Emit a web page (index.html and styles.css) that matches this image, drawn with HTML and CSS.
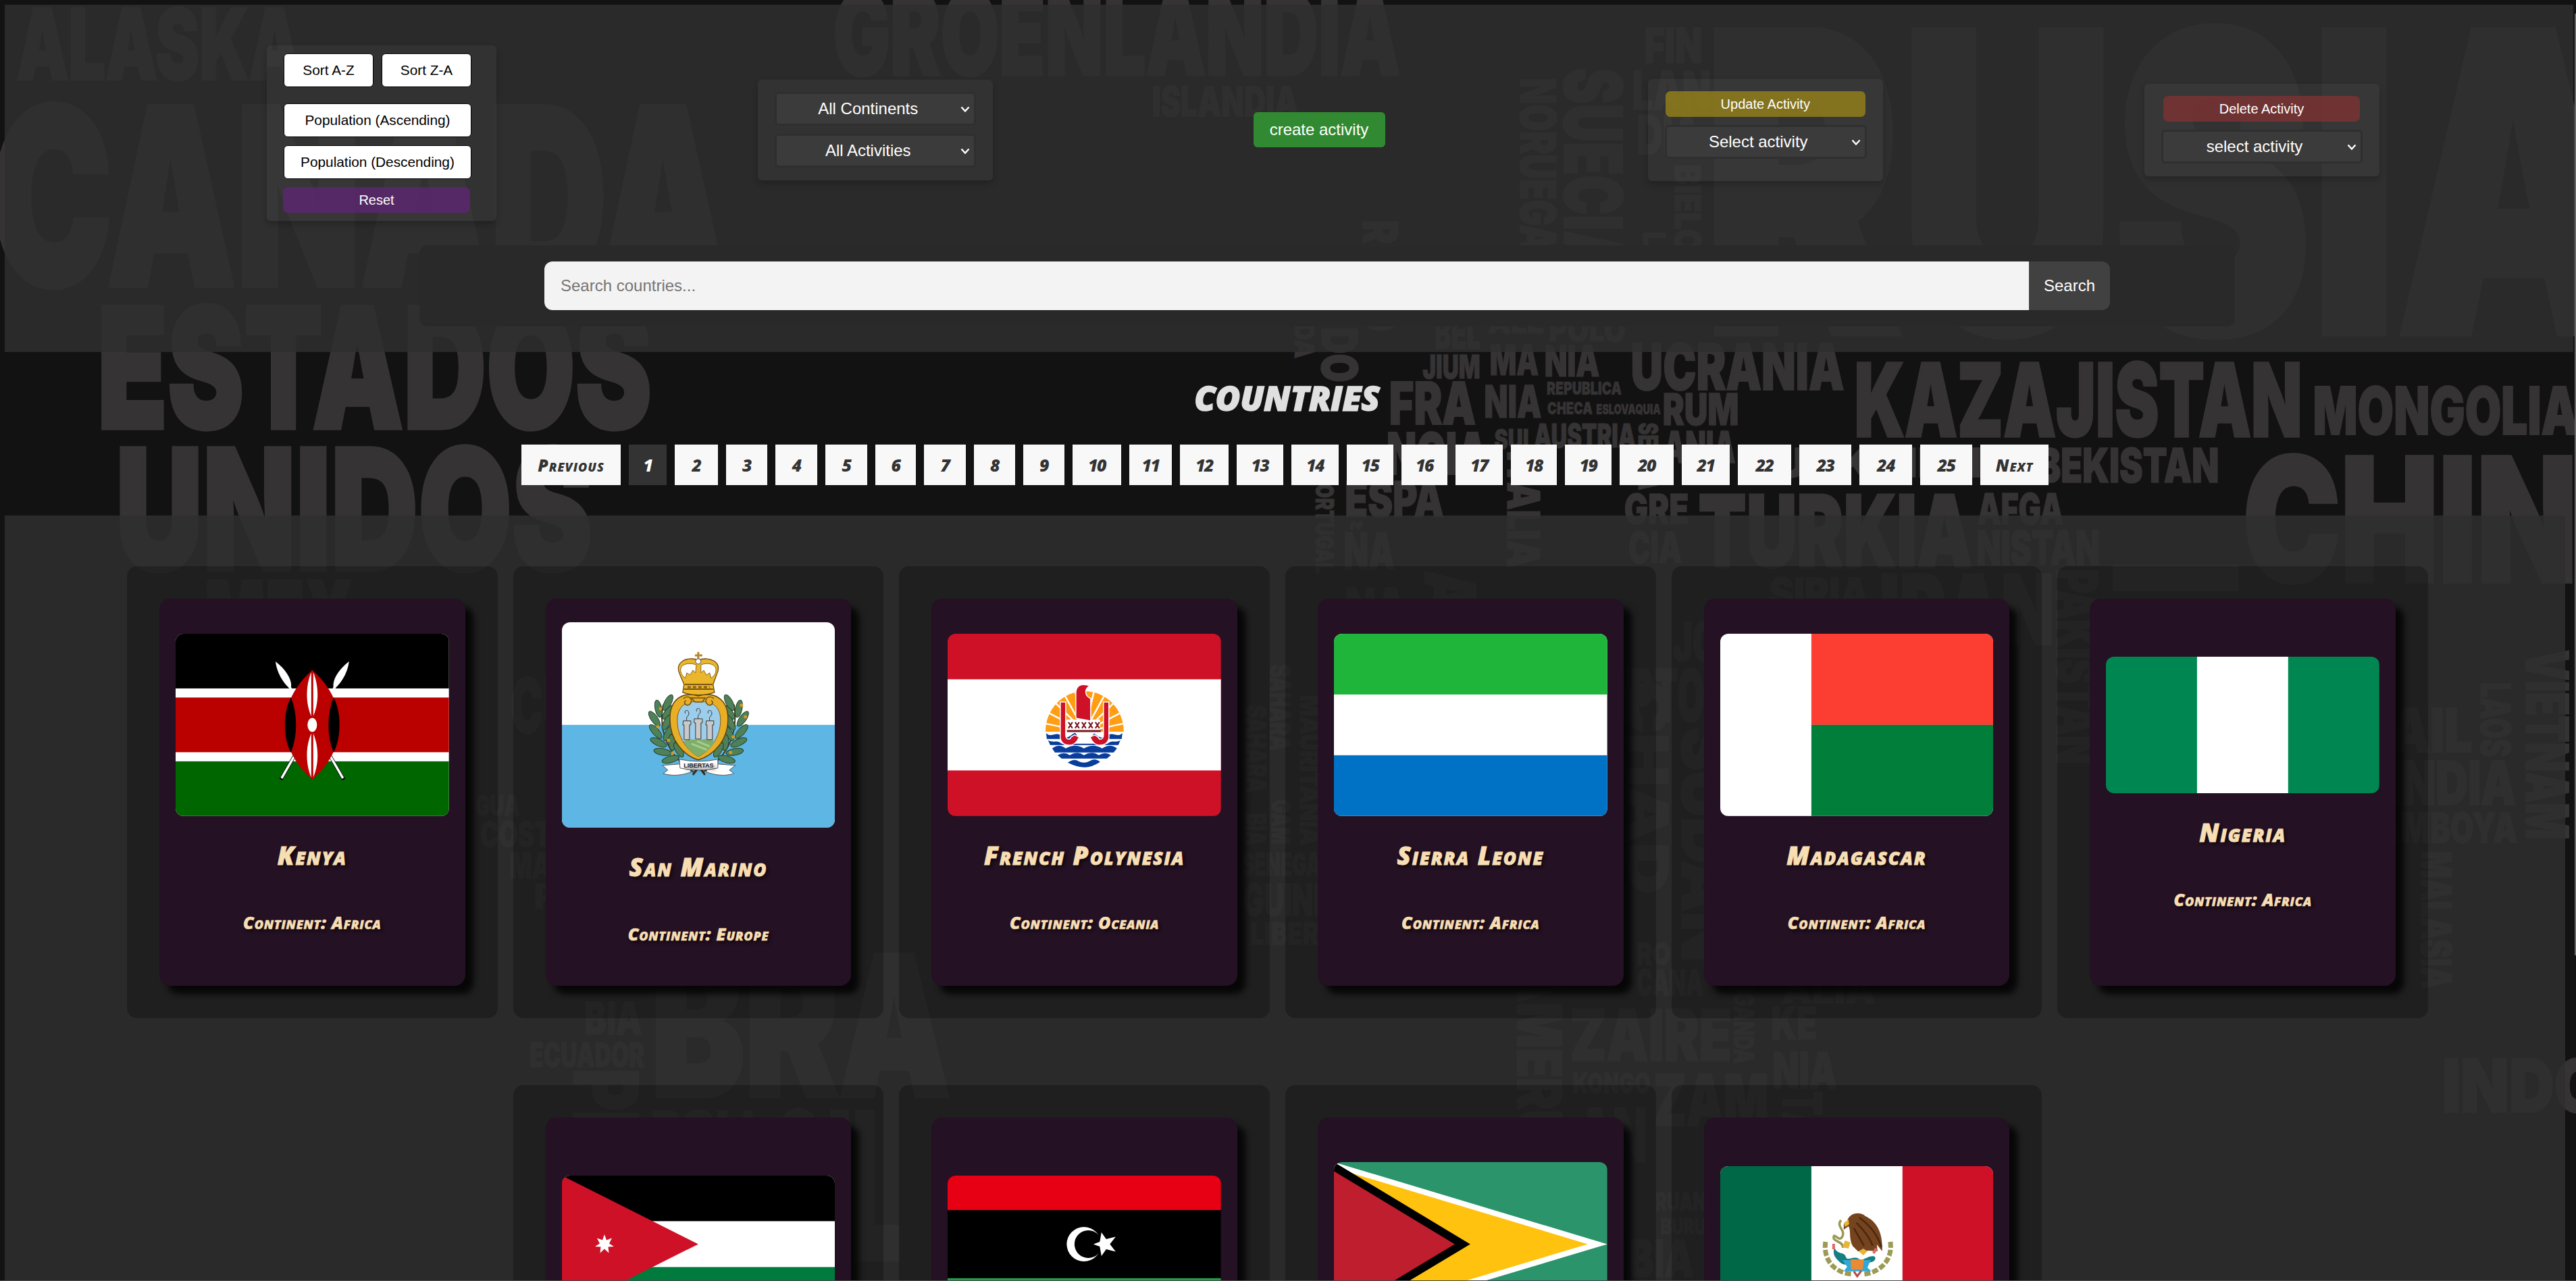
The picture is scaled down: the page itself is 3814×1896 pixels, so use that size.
FILE: index.html
```html
<!DOCTYPE html>
<html lang="en">
<head>
<meta charset="utf-8">
<title>Countries</title>
<link rel="stylesheet" href="styles.css">
</head>
<body>
<svg class="word-map" id="word-map" viewBox="0 0 3814 1896" aria-hidden="true"></svg>
<div class="page">
  <header class="panel">
    <div class="filters">
      <section class="group group-sort">
        <div class="sort-row"><button class="btn-white">Sort A-Z</button><button class="btn-white">Sort Z-A</button></div>
        <button class="btn-white">Population (Ascending)</button>
        <button class="btn-white">Population (Descending)</button>
        <button class="btn-color btn-reset">Reset</button>
      </section>
      <section class="group group-filter">
        <div class="select"><span>All Continents</span><svg class="chevron" viewBox="0 0 14 10"><path d="M1.5 1.5 7 7.5 12.5 1.5"/></svg></div>
        <div class="select"><span>All Activities</span><svg class="chevron" viewBox="0 0 14 10"><path d="M1.5 1.5 7 7.5 12.5 1.5"/></svg></div>
      </section>
      <button class="btn-create">create activity</button>
      <section class="group group-update">
        <button class="btn-color btn-update">Update Activity</button>
        <div class="select"><span>Select activity</span><svg class="chevron" viewBox="0 0 14 10"><path d="M1.5 1.5 7 7.5 12.5 1.5"/></svg></div>
      </section>
      <section class="group group-delete">
        <button class="btn-color btn-delete">Delete Activity</button>
        <div class="select"><span>select activity</span><svg class="chevron" viewBox="0 0 14 10"><path d="M1.5 1.5 7 7.5 12.5 1.5"/></svg></div>
      </section>
    </div>
    <form class="search"><input type="text" placeholder="Search countries..."><button type="button">Search</button></form>
  </header>

  <h1>COUNTRIES</h1>
  <nav class="pager">
    <a class="step">Previous</a><a class="current">1</a><a>2</a><a>3</a><a>4</a><a>5</a><a>6</a><a>7</a><a>8</a><a>9</a><a>10</a><a>11</a><a>12</a><a>13</a><a>14</a><a>15</a><a>16</a><a>17</a><a>18</a><a>19</a><a>20</a><a>21</a><a>22</a><a>23</a><a>24</a><a>25</a><a class="step">Next</a>
  </nav>

  <main class="panel cards">
    <article class="slot"><div class="card">
      <svg class="flag" viewBox="0 0 405 270">
        <rect width="405" height="270" fill="#fff"/><rect width="405" height="81" fill="#000"/><rect y="94.500" width="405" height="81" fill="#b00"/><rect y="189" width="405" height="81" fill="#060"/>
        <g><path d="M229 181 249 216" stroke="#000" stroke-width="5"/><path d="M169 78 176 96M229 181 248 214" stroke="#fff" stroke-width="3.500"/><path d="M148 41C150 58 160 74 170 82 175 72 165 54 148 41Z" fill="#fff"/></g>
        <g transform="translate(405 0) scale(-1 1)"><path d="M229 181 249 216" stroke="#000" stroke-width="5"/><path d="M169 78 176 96M229 181 248 214" stroke="#fff" stroke-width="3.500"/><path d="M148 41C150 58 160 74 170 82 175 72 165 54 148 41Z" fill="#fff"/></g>
        <path d="M202.500 54C256 100 256 170 202.500 216 149 170 149 100 202.500 54Z" fill="#b00"/>
        <path d="M171 94C159 115 159 155 171 176 181 150 181 120 171 94ZM234 94C246 115 246 155 234 176 224 150 224 120 234 94Z" fill="#000"/>
        <path d="M202.500 54C192 75 192 105 202.500 125 213 105 213 75 202.500 54ZM202.500 216C192 195 192 165 202.500 145 213 165 213 195 202.500 216Z" fill="#fff"/>
        <path d="M202.500 54V216" stroke="#b00" stroke-width="3"/><ellipse cx="202.500" cy="135" rx="7" ry="10.500" fill="#fff"/>
      </svg>
      <h2>Kenya</h2><p>Continent: Africa</p>
    </div></article>

    <article class="slot"><div class="card">
      <svg class="flag" viewBox="0 0 405 304">
        <rect width="405" height="304" fill="#fff"/><rect y="152" width="405" height="152" fill="#5eb6e4"/>
        <g fill="none" stroke="#4b3a20" stroke-width="2"><path d="M195 222C160 200 142 165 150 122M209 222C245 200 262 165 255 122"/></g>
        <g fill="#4f8158" stroke="#24402b" stroke-width="1">
          <g id="laurel">
            <ellipse cx="157" cy="119" rx="5" ry="13" transform="rotate(28 157 119)"/><ellipse cx="143" cy="128" rx="5" ry="13" transform="rotate(-12 143 128)"/><ellipse cx="158" cy="133" rx="5" ry="13" transform="rotate(40 158 133)"/><ellipse cx="137" cy="143" rx="5" ry="13" transform="rotate(-35 137 143)"/><ellipse cx="156" cy="148" rx="5" ry="13" transform="rotate(30 156 148)"/><ellipse cx="139" cy="162" rx="5" ry="13" transform="rotate(-42 139 162)"/><ellipse cx="158" cy="164" rx="5" ry="13" transform="rotate(30 158 164)"/><ellipse cx="143" cy="178" rx="5" ry="13" transform="rotate(-65 143 178)"/><ellipse cx="163" cy="178" rx="5" ry="12" transform="rotate(-5 163 178)"/><ellipse cx="149" cy="192" rx="5" ry="13" transform="rotate(-80 149 192)"/><ellipse cx="173" cy="189" rx="5" ry="12" transform="rotate(-30 173 189)"/><ellipse cx="161" cy="203" rx="5" ry="13" transform="rotate(75 161 203)"/>
          </g>
          <use href="#laurel" transform="translate(405 0) scale(-1 1)"/>
        </g>
        <g fill="#d99a1f"><circle cx="146" cy="128" r="2.500"/><circle cx="142" cy="155" r="2.500"/><circle cx="158" cy="175" r="2.500"/><circle cx="164" cy="194" r="2.500"/><circle cx="266" cy="123" r="2.500"/><circle cx="272" cy="140" r="2.500"/><circle cx="254" cy="170" r="2.500"/><circle cx="250" cy="193" r="2.500"/></g>
        <path d="M202 109C180 103 160 112 160 143 160 175 180 197 202 204 225 197 246 175 246 143 246 112 225 103 202 109Z" fill="#e8ae25" stroke="#5b4312" stroke-width="1.500"/>
        <path d="M202 118C187 116 171 122 171 145 171 170 185 190 202 199 220 190 235 170 235 145 235 122 219 116 202 118Z" fill="#9ccdea" stroke="#7b591a"/>
        <path d="M180 177C188 172 196 174 202 174 212 174 220 171 227 177 220 187 212 194 202 199 192 194 186 187 180 177Z" fill="#7fae6a"/>
        <path d="M192 180 215 189M200 176 219 184" stroke="#a5cc8c" stroke-width="3"/>
        <g fill="#c9c9c9" stroke="#333" stroke-width="1"><path d="M180 146h11v6h-2v22h-8v-22h-2zM196 143h12v6h-2v24h-8v-24h-2zM214 146h11v6h-2v22h-8v-22h-2z"/><path d="M185 146c-2-8 4-6 3-12s-8-3-5 1M202 143c-2-8 4-6 3-12s-8-3-5 1M219 146c-2-8 4-6 3-12s-8-3-5 1" fill="none"/></g>
        <path d="M180 113c9-7 16 3 9 9-6 3-10-4-5-6M225 113c-9-7-16 3-9 9 6 3 10-4 5-6M192 112h20l-4 6h-11z" fill="#e8ae25" stroke="#704f12" stroke-width="1.500"/>
        <path d="M181 92 175 78C165 58 187 50 202 56 218 50 239 58 229 78L224 92 226 104C212 109 193 109 179 104Z" fill="#eab62c" stroke="#6b4b10" stroke-width="1.300"/>
        <path d="M178 78C170 64 185 58 199 63L198 75 194 71 190 78 185 75 183 83ZM226 78C234 64 219 58 206 63L206 75 210 71 214 78 219 75 221 83Z" fill="#fff" stroke="#8d6718"/>
        <path d="M182 92h41M181 99h43" stroke="#7a5710" stroke-width="2"/><path d="M186 96h33" stroke="#8d5d16" stroke-width="3" stroke-dasharray="5 3"/>
        <path d="M202 44v11M197 49h11" stroke="#b8862a" stroke-width="3"/><circle cx="202" cy="58" r="4" fill="#fff" stroke="#555"/>
        <path d="M194 226 203 214 212 226" fill="none" stroke="#3c2c18" stroke-width="3"/>
        <path d="M174 210 149 212 157 219 150 224C165 229 180 226 191 222L190 213M231 210 257 212 248 219 255 224C240 229 226 226 214 222L216 213" fill="#fff" stroke="#555"/>
        <path d="M174 203Q203 209 231 203V216Q203 222 175 216Z" fill="#fff" stroke="#555"/>
        <text x="202.500" y="215" class="motto">LIBERTAS</text>
      </svg>
      <h2>San Marino</h2><p>Continent: Europe</p>
    </div></article>

    <article class="slot"><div class="card">
      <svg class="flag" viewBox="0 0 405 270">
        <rect width="405" height="270" fill="#ce1126"/><rect y="67.500" width="405" height="135" fill="#fff"/>
        <path d="M145 145A58 60 0 1 1 261 145Z" fill="#ff9d14"/>
        <path d="M203 145 130 130M203 145 132 108M203 145 145 88M203 145 163 72M203 145 185 68M203 145 221 68M203 145 243 72M203 145 261 88M203 145 274 108M203 145 276 130" stroke="#fff" stroke-width="2.500"/>
        <path d="M146 147c8 8 14-3 22 4 8 6 14 0 18-3q16-8 32 0c5 4 12 9 19 3 8-7 14 4 22-4l-1 9H147zM149 158c8 4 14-1 20 5h68c6-6 12-1 19-5l-3 7H152zM155 170q10-8 20 0 14-8 27 0 14-8 27 0 12-8 22 0l-5 6h-87zM163 180q10-6 18 0 11-7 21 0 12-7 22 0 10-6 18 0l-6 5h-67zM178 191q10-7 16-2 8 4 16 0 8-6 16 1-12 8-23 8t-25-7z" fill="#083d9c"/>
        <path d="M188 145h31l-9 12h-14z" fill="#fff"/><path d="M176 127h50v18h-50z" fill="#fff"/>
        <g fill="#ce1126" stroke="#fff" stroke-width="1.500"><path d="M190 125V88C190 76 199 73 211 77 202 82 203 92 212 96V129Z"/><path d="M167 101h8v48c0 8 6 9 8 4l5-3 7 3c-3 8-9 13-16 12-10 0-13-9-12-16zM239 101h-8v48c0 8-6 9-8 4l-5-3-7 3c3 8 9 13 16 12 10 0 13-9 12-16z"/></g>
        <path d="M177 144h50" stroke="#7b1720" stroke-width="3"/><path d="M179 131l6 9m0-9-6 9m10-9 6 9m0-9-6 9m10-9 6 9m0-9-6 9m10-9 6 9m0-9-6 9m10-9 6 9m0-9-6 9" stroke="#7b1720" stroke-width="2"/>
      </svg>
      <h2>French Polynesia</h2><p>Continent: Oceania</p>
    </div></article>

    <article class="slot"><div class="card">
      <svg class="flag" viewBox="0 0 405 270"><rect width="405" height="270" fill="#fff"/><rect width="405" height="90" fill="#1eb53a"/><rect y="180" width="405" height="90" fill="#0072c6"/></svg>
      <h2>Sierra Leone</h2><p>Continent: Africa</p>
    </div></article>

    <article class="slot"><div class="card">
      <svg class="flag" viewBox="0 0 405 270"><rect width="405" height="270" fill="#fff"/><rect x="135" width="270" height="135" fill="#fc3d32"/><rect x="135" y="135" width="270" height="135" fill="#007e3a"/></svg>
      <h2>Madagascar</h2><p>Continent: Africa</p>
    </div></article>

    <article class="slot"><div class="card">
      <svg class="flag" viewBox="0 0 405 203"><rect width="405" height="203" fill="#008751"/><rect x="135" width="135" height="203" fill="#fff"/></svg>
      <h2>Nigeria</h2><p>Continent: Africa</p>
    </div></article>

    <article class="slot second-row"><div class="card">
      <svg class="flag" viewBox="0 0 405 203"><rect width="405" height="203" fill="#fff"/><rect width="405" height="67.500" fill="#000"/><rect y="135.500" width="405" height="67.500" fill="#007a3d"/><path d="M0 0 202 101.500 0 203Z" fill="#ce1126"/><path d="M63 87 66 95.500 74 92.500 70 100.500 77 105 68.500 105.500 69.500 114.500 63 108.500 56.500 114.500 57.500 105.500 49 105 56 100.500 52 92.500 60 95.500Z" fill="#fff"/></svg>
      <h2>Jordan</h2><p>Continent: Asia</p>
    </div></article>

    <article class="slot"><div class="card">
      <svg class="flag" viewBox="0 0 405 203"><rect width="405" height="203" fill="#000"/><rect width="405" height="51" fill="#e70013"/><rect y="152" width="405" height="51" fill="#239e46"/><circle cx="202" cy="101.500" r="25.500" fill="#fff"/><circle cx="208.500" cy="101.500" r="20.500" fill="#000"/><path d="M216 101.500 225.500 98 228 84 235 94 249 90.500 240.500 101.500 249 112.500 235 109 228 119 225.500 105Z" fill="#fff"/></svg>
      <h2>Libya</h2><p>Continent: Africa</p>
    </div></article>

    <article class="slot"><div class="card">
      <svg class="flag" viewBox="0 0 405 243"><rect width="405" height="243" fill="#2b946a"/><path d="M0 0 405 121.500 0 243Z" fill="#fff"/><path d="M0 8.500 376 121.500 0 234.500Z" fill="#ffc20e"/><path d="M0 0 202 121.500 0 243Z" fill="#000"/><path d="M0 13.500 179 121.500 0 229.500Z" fill="#be1e2d"/></svg>
      <h2>Guyana</h2><p>Continent: South America</p>
    </div></article>

    <article class="slot"><div class="card">
      <svg class="flag" viewBox="0 0 405 231"><rect width="405" height="231" fill="#fff"/><rect width="135" height="231" fill="#006847"/><rect x="270" width="135" height="231" fill="#ce1126"/>
        <path d="M156 112C152 140 170 158 195 160M252 112C256 140 236 158 212 160" fill="none" stroke="#9c9a55" stroke-width="7" stroke-dasharray="9 3"/>
        <path d="M179 80c-8 10 7 14 2 24s-12-6-13 1 14 6 14 16" fill="none" stroke="#9a9a56" stroke-width="3.500"/>
        <path d="M188 82C190 70 206 66 215 74 232 82 241 98 240 126L232 116 233 126 220 125 204 126 196 118C190 106 194 94 190 89L183 94 183 86Z" fill="#75431d"/>
        <path d="M206 76C222 88 232 100 239 120M202 84C214 96 221 105 226 118M198 92 213 118" stroke="#4a2812" stroke-width="2.500" fill="none"/>
        <path d="M183 84l7-5 1 7-6 4zM185 110l8 3-3 9-9-2zM205 126l7-4 6 4-6 6z" fill="#e8b53b"/>
        <path d="M169 118c2 14 15 8 17 16s11-2 19 3 14-6 24-3c4 7-8 10-16 9s-27 8-36-1-10-11-8-24z" fill="#158083"/>
        <path d="M168 115v8M231 122l-4 7" stroke="#e0676a" stroke-width="4"/>
        <path d="M181 139h42l-5 11 6 6h-41l5-7z" fill="#32a9d5"/><path d="M193 138h20l-2 15h-17z" fill="#e98a34"/><path d="M198 156l5 7 6-8" fill="none" stroke="#b54848" stroke-width="3"/>
      </svg>
      <h2>Mexico</h2><p>Continent: North America</p>
    </div></article>
  </main>
</div>
<div class="scroll-y"></div>
<div class="scroll-x"></div>
<script src="words.js"></script>
</body>
</html>
```
FILE: styles.css
```css
* { box-sizing: border-box; }

body {
  margin: 0;
  height: 1896px;
  overflow: hidden;
  position: relative;
  background: #121212;
  font-family: "Liberation Sans", Arial, sans-serif;
}

.word-map { position: absolute; inset: 0; width: 3814px; height: 1896px; }
.word-map text, .word-map rect { fill: #363334; }
.word-map text { font-family: Inter, sans-serif; font-weight: 900; stroke: #363334; }

.page { position: relative; padding: 7px 4px 0 7px; }
.panel { background: rgba(46, 46, 46, .86); }

header.panel { height: 514px; }

.filters {
  display: flex;
  align-items: center;
  justify-content: space-between;
  width: 3128px;
  height: 356px;
  margin-left: 388px;
  padding-top: 15px;
}

.group {
  display: flex;
  flex-direction: column;
  width: 348px;
  background: rgba(255, 255, 255, .04);
  border-radius: 6px;
  box-shadow: 0 5px 10px rgba(0, 0, 0, .2);
}
.group-sort { width: 340px; height: 260px; padding: 12px 37px 0 25px; margin-top: 9px; }
.group-filter { height: 149px; padding: 18px 25px 0; gap: 12px; }
.group-update { height: 151px; padding: 18px 24px 0 25px; }
.group-delete { height: 137px; padding: 18px 25px 0; }
.group-update .select, .group-delete .select { margin-top: 12px; }

.sort-row { display: flex; gap: 12px; margin-bottom: 24px; }
.sort-row .btn-white { flex: 1; margin: 0; }

button { font-family: inherit; border: 0; padding: 0; margin: 0; }

.btn-white {
  height: 50px;
  margin-bottom: 12px;
  border: 1px solid #000;
  border-radius: 6px;
  background: #fff;
  color: #000;
  font-size: 20.8px;
}
.btn-color { height: 38px; border-radius: 7px; color: #fff; font-size: 20px; }
.btn-reset { width: 277px; margin-left: -1px; background: rgba(92, 37, 112, .8); }
.btn-update { width: 296px; background: rgba(150, 130, 25, .8); margin-left: 1px; }
.btn-delete { width: 291px; background: rgba(125, 50, 50, .8); margin-left: 3px; }

.select {
  position: relative;
  height: 50px;
  border: 3px solid #2f2f2f;
  border-radius: 6px;
  background: #3b3b3b;
  color: #fff;
  font-size: 24px;
  line-height: 44px;
  text-align: center;
  padding-right: 22px;
}
.chevron { position: absolute; right: 6px; top: 18px; width: 14px; height: 10px; fill: none; stroke: #fff; stroke-width: 2.4; }

.btn-create { width: 195px; height: 52px; margin: 0 2px 2px -2px; border-radius: 6px; background: #318a31; color: #fff; font-size: 24px; }

.search {
  display: flex;
  width: 2688px;
  height: 120px;
  margin-left: 614px;
  padding: 24px 185px;
  border-radius: 12px;
  background: #292929;
}
.search input {
  flex: 1;
  height: 72px;
  border: 0;
  padding: 0 24px;
  border-radius: 12px 0 0 12px;
  background: #f3f3f3;
  font: 24px "Liberation Sans", Arial, sans-serif;
}
.search input::placeholder { color: #757575; }
.search button { width: 120px; height: 72px; border-radius: 0 12px 12px 0; background: #414141; color: #fff; font-size: 24px; }

h1, h2, p, .pager {
  font-family: "Open Sans", sans-serif;
  font-style: italic;
  font-weight: 800;
}

h1 {
  margin: 0;
  height: 137px;
  padding-top: 33px;
  padding-right: 6px;
  text-align: center;
  color: #e0e0e0;
  font-size: 50px;
  line-height: 70px;
  letter-spacing: -.2px;
  -webkit-text-stroke: 1.5px #e0e0e0;
}

.pager {
  display: grid;
  grid-template-columns: 147px 56px 64px 61px 62px 62px 60px 62px 61px 61px 72px 63px 72px 69px 70px 69px 68px 70px 68px 69px 80px 71px 79px 77px 78px 77px 101px;
  gap: 12px;
  width: 2261px;
  margin: 0 0 45px 765px;
}
.pager a {
  height: 60px;
  line-height: 60px;
  text-align: center;
  background: #f8f8f8;
  color: #333;
  font-size: 25px;
  font-variant: small-caps;
  letter-spacing: -1.5px;
}
.pager .step { letter-spacing: 1px; }
.pager .current { background: #333; color: #fff; }

.cards {
  display: grid;
  grid-template-columns: repeat(6, 1fr);
  gap: 99px 23px;
  width: 3791px;
  height: 1133px;
  padding: 75px 203px 0 181px;
  overflow: hidden;
}
.slot { height: 669px; padding: 48px; border-radius: 15px; background: rgba(0, 0, 0, .25); }
.second-row { grid-column-start: 2; }
.card {
  display: flex;
  flex-direction: column;
  justify-content: center;
  height: 573px;
  padding: 0 24px;
  border-radius: 16px;
  background: #241123;
  box-shadow: 12px 12px 10px rgba(0, 0, 0, .8);
  text-align: center;
  color: #f8deb3;
  text-shadow: 3px 3px 5px rgba(0, 0, 0, .7);
}
.flag { display: block; width: 100%; flex: none; border-radius: 12px; }
.motto { font: bold 9px "Liberation Sans", sans-serif; text-anchor: middle; fill: #222; }
h2 { margin: 30px 0 0; font-size: 37px; line-height: 56px; font-variant: small-caps; letter-spacing: 2px; white-space: nowrap; -webkit-text-stroke: 1px #f8deb3; }
p { margin: 56px 0 27px; font-size: 25px; line-height: 30px; font-variant: small-caps; letter-spacing: .8px; white-space: nowrap; -webkit-text-stroke: .6px #f8deb3; }

.scroll-y { position: absolute; right: 0; top: 20px; width: 2px; height: 1394px; background: #686868; }
.scroll-x { position: absolute; left: 0; bottom: 0; width: 100%; height: 1px; background: #4a4a4a; }
```
FILE: words.js
```javascript
// Each entry: word, left, right, top, bottom, and "v" for words that read downwards.
const words = [
  ["ALASKA", 30, 440, 12, 118], ["CANADA", 0, 1065, 158, 422], ["GROENLANDIA", 1240, 2067, -12, 111],
  ["ISLANDIA", 1708, 1920, 128, 172], ["RUSIA", 2544, 3875, 47, 491], ["ESTADOS", 153, 956, 454, 634],
  ["UNIDOS", 180, 868, 663, 844], ["MEX", 309, 518, 859, 980], ["FIN", 2437, 2518, 41, 93],
  ["LAN", 2419, 2530, 105, 162], ["DIA", 2427, 2515, 170, 228], ["SUECIA", 2316, 2402, 105, 400, "v"],
  ["NORUEGA", 2251, 2304, 118, 370, "v"], ["BIELO", 2480, 2518, 245, 372, "v"], ["L", 2433, 2466, 345, 362, "v"],
  ["REINO", 2018, 2070, 328, 488, "v"], ["UNIDO", 1957, 2010, 390, 563, "v"], ["IRLANDA", 1917, 1946, 370, 529, "v"],
  ["BEL", 2126, 2190, 470, 516], ["JIUM", 2108, 2190, 525, 560], ["ALE", 2205, 2285, 460, 493],
  ["MA", 2208, 2276, 510, 555], ["NIA", 2289, 2366, 511, 557], ["POLO", 2295, 2405, 470, 505],
  ["FRA", 2060, 2182, 565, 628], ["NCIA", 2056, 2200, 640, 702], ["NIA", 2200, 2280, 570, 618],
  ["REPUBLICA", 2291, 2400, 565, 584], ["CHECA", 2292, 2357, 595, 613], ["ESLOVAQUIA", 2364, 2458, 598, 613],
  ["SUI", 2214, 2262, 635, 665], ["AUSTRIA", 2273, 2420, 627, 662], ["UCRANIA", 2418, 2727, 508, 577],
  ["RUM", 2464, 2572, 582, 629], ["ANIA", 2466, 2567, 638, 685], ["SERBIA", 2426, 2455, 627, 724, "v"],
  ["KAZAJISTAN", 2751, 3403, 537, 646], ["MONGOLIA", 3428, 3814, 572, 643], ["UZBEKISTAN", 2945, 3283, 663, 714],
  ["TURKMEN", 2580, 2932, 663, 706], ["CHINA", 3330, 3960, 676, 861], ["ESPA", 1994, 2135, 712, 765],
  ["ÑA", 1992, 2062, 788, 842], ["PORTUGAL", 1948, 1975, 700, 847, "v"], ["ITALIA", 2232, 2280, 670, 838, "v"],
  ["GRE", 2407, 2498, 731, 775], ["CIA", 2413, 2488, 787, 833], ["TURKIA", 2520, 2915, 732, 840],
  ["AFGA", 2930, 3053, 730, 776], ["NISTAN", 2929, 3107, 785, 836], ["SIRIA", 2622, 2765, 855, 900],
  ["IRAN", 2788, 3036, 850, 954], ["PAKISTAN", 3045, 3106, 845, 1128, "v"], ["NA", 1995, 2080, 870, 930],
  ["ARGELIA", 2110, 2185, 848, 1200, "v"], ["JORDAN", 2480, 2680, 920, 978], ["EGIPTO", 2330, 2520, 990, 1068],
  ["SUDAN", 2490, 2560, 1080, 1420, "v"], ["CHAD", 2410, 2470, 1010, 1320, "v"],
  ["VIETNAM", 3740, 3803, 965, 1240, "v"], ["LAOS", 3673, 3717, 1012, 1118, "v"], ["TAIL", 3500, 3657, 1048, 1113],
  ["INDIA", 3540, 3722, 1126, 1191], ["CAMBOYA", 3490, 3725, 1203, 1247], ["MALASIA", 3585, 3630, 1262, 1462, "v"],
  ["INDO", 3620, 3850, 1567, 1646], ["BRA", 974, 1397, 1413, 1622], ["BIA", 868, 948, 1483, 1531],
  ["ECUADOR", 786, 952, 1543, 1579], ["PERU", 850, 945, 1586, 1830, "v"], ["BOLI", 966, 1115, 1644, 1690],
  ["SIL", 1150, 1323, 1646, 1864], ["CUBA", 760, 940, 1003, 1085], ["GUA", 705, 768, 1177, 1207],
  ["COSTA", 713, 840, 1216, 1253], ["MALA", 757, 860, 1262, 1300], ["PA", 792, 860, 1308, 1345],
  ["SAHARA", 1880, 1911, 985, 1110, "v"], ["SAHARA", 1845, 1875, 1045, 1172, "v"], ["GAM", 1883, 1911, 1185, 1248, "v"],
  ["BIA", 1845, 1875, 1205, 1250, "v"], ["MAURITANIA", 1925, 1955, 1030, 1250, "v"], ["SENEGAL", 1840, 1970, 1262, 1296],
  ["GUINEA", 1843, 2000, 1308, 1355], ["LIBERIA", 1853, 1990, 1365, 1398],
  ["CAMERUN", 2247, 2312, 1380, 1745, "v"], ["ZAIRE", 2328, 2560, 1494, 1570], ["UGANDA", 2567, 2597, 1450, 1573, "v"],
  ["KE", 2625, 2688, 1490, 1538], ["NIA", 2627, 2717, 1557, 1611], ["KONGO", 2330, 2442, 1588, 1618],
  ["ZAM", 2452, 2615, 1590, 1666], ["TANZA", 2640, 2698, 1618, 1800, "v"], ["CANA", 2425, 2520, 1435, 1473],
  ["RO", 2425, 2472, 1395, 1428], ["ALIA", 2640, 2775, 1450, 1485], ["AN", 2340, 2435, 1640, 1720],
  ["RUAN", 2452, 2525, 1765, 1792], ["BURU", 2460, 2525, 1803, 1827], ["BIA", 2415, 2505, 1835, 1890],
];

const CAP_HEIGHT = 0.727;
const SIDE_BEARING = 0.05;
const ns = "http://www.w3.org/2000/svg";
const map = document.getElementById("word-map");

for (const [word, left, right, top, bottom, down] of words) {
  const text = document.createElementNS(ns, "text");
  const height = down ? right - left : bottom - top;
  const pad = height * SIDE_BEARING;
  text.textContent = word;
  text.setAttribute("font-size", height / CAP_HEIGHT);
  text.setAttribute("stroke-width", height * 0.03);
  text.setAttribute("textLength", (down ? bottom - top : right - left) + pad * 2);
  text.setAttribute("lengthAdjust", "spacingAndGlyphs");
  text.setAttribute("transform", down ? `translate(${left} ${top - pad}) rotate(90)` : `translate(${left - pad} ${bottom})`);
  map.append(text);
}

const block = document.createElementNS(ns, "rect");
block.setAttribute("x", 3128);
block.setAttribute("y", 836);
block.setAttribute("width", 187);
block.setAttribute("height", 39);
map.append(block);
```
